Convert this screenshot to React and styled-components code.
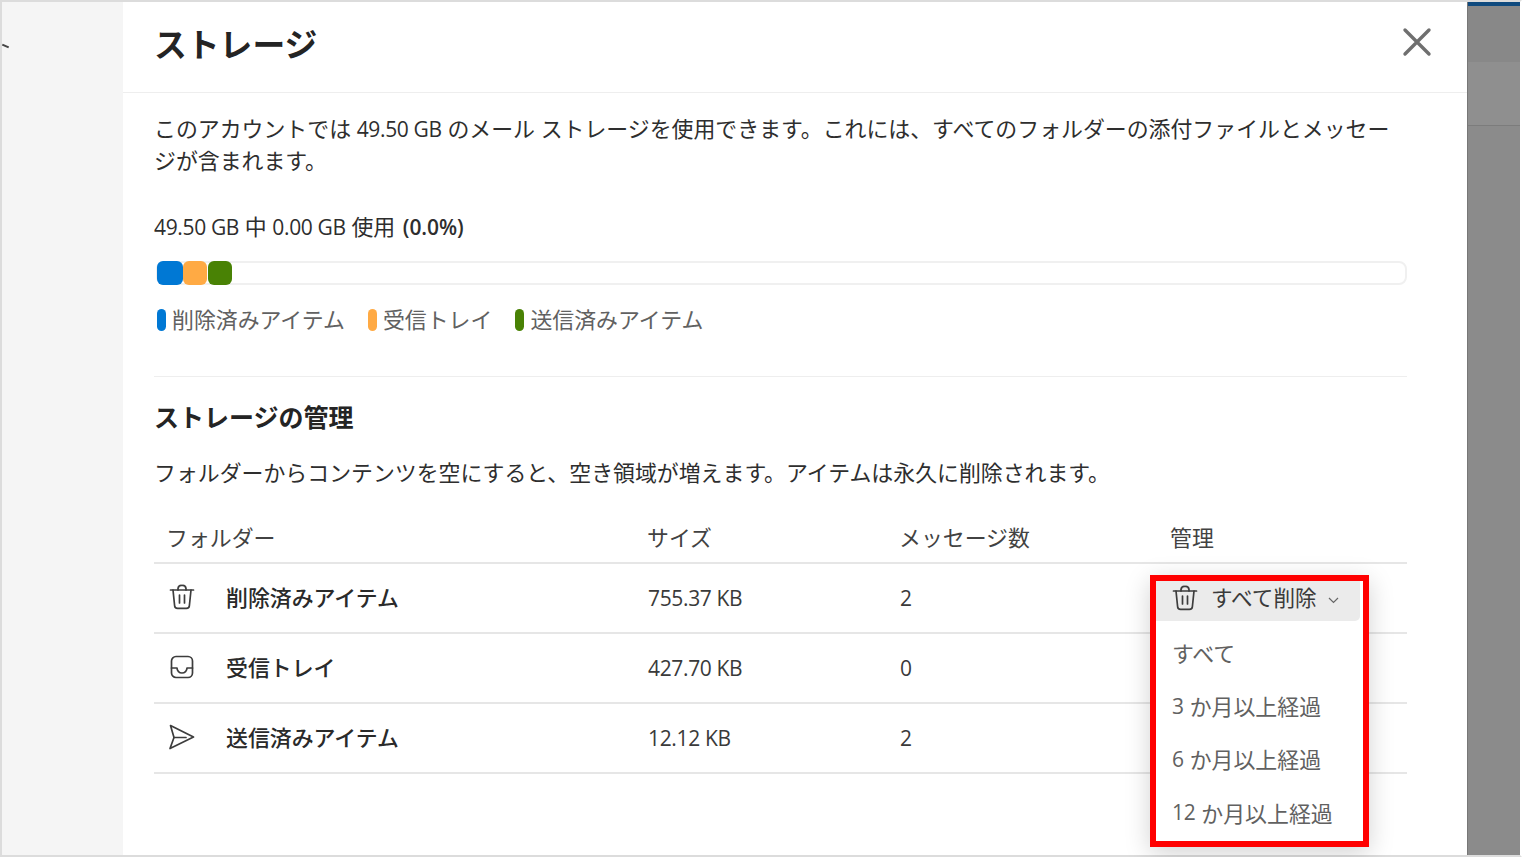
import React from 'react';
import styled, { createGlobalStyle } from 'styled-components';

const GlobalStyle = createGlobalStyle`
  html, body {
    margin: 0;
    height: 100%;
    overflow: hidden;
    background: #fff;
  }
  body {
    font-family: "Open Sans", "Noto Sans CJK JP", sans-serif;
    color: #242424;
  }
`;

const Frame = styled.div`
  box-sizing: border-box;
  display: flex;
  width: 1522px;
  height: 857px;
  border-top: 2px solid #dcdcdc;
  border-left: 2px solid #dcdcdc;
  border-bottom: 2px solid #dcdcdc;
  border-right: 2px solid #fff;
`;

const SidePane = styled.div`
  position: relative;
  width: 121px;
  flex-shrink: 0;
  background: #f5f5f5;
`;

const StrayMark = styled.span`
  position: absolute;
  left: 0;
  top: 43px;
  width: 7px;
  height: 2px;
  background: #444;
  transform: rotate(24deg);
`;

const Modal = styled.main`
  width: 1344px;
  flex-shrink: 0;
  background: #fff;
  display: flex;
  flex-direction: column;
`;

const Header = styled.header`
  box-sizing: border-box;
  height: 91px;
  padding: 0 35px 10px 31px;
  display: flex;
  align-items: center;
  justify-content: space-between;
  border-bottom: 1px solid #eee;
`;

const Title = styled.h1`
  margin: 5px 0 0;
  font-size: 32.8px;
  font-weight: 700;
  line-height: 44px;
  color: #242424;
`;

const CloseButton = styled.button`
  border: 0;
  padding: 0;
  background: none;
  display: flex;
  color: #6f6f6f;
`;

const Body = styled.div`
  padding: 20px 60px 0 31px;
`;

const Latin = styled.span`
  font-size: 21px;
  letter-spacing: -0.35px;
`;

const Percent = styled.b`
  margin-left: 2px;
  font-size: 21px;
  font-weight: 600;
  letter-spacing: -0.1px;
`;

const Intro = styled.p`
  margin: 0;
  font-size: 21.9px;
  line-height: 31px;
  color: #2e2e2e;
`;

const UsageLabel = styled.p`
  margin: 36px 0 0;
  font-size: 21.9px;
  line-height: 30px;
  color: #2e2e2e;
`;

const Track = styled.div`
  box-sizing: border-box;
  margin: 19px 0 0 2px;
  height: 24px;
  border: 2px solid #f0f0f0;
  border-radius: 8px;
  display: flex;
`;

const Segment = styled.span`
  width: ${p => p.$width}px;
  height: 24px;
  margin: -2px 0 0 ${p => p.$gap}px;
  border-radius: 6px;
  background: ${p => p.$color};
`;

const Legend = styled.ul`
  margin: 20px 0 0 3px;
  padding: 0;
  list-style: none;
  display: flex;
  gap: 23px;
`;

const LegendItem = styled.li`
  display: flex;
  align-items: center;
  gap: 6px;
  font-size: 21.9px;
  line-height: 30px;
  color: #616161;
`;

const LegendDot = styled.span`
  width: 9px;
  height: 22px;
  border-radius: 5px;
  background: ${p => p.$color};
`;

const Divider = styled.hr`
  margin: 41px 0 0;
  border: 0;
  border-top: 1px solid #eee;
`;

const SectionTitle = styled.h2`
  margin: 23px 0 0;
  font-size: 25px;
  line-height: 34px;
  font-weight: 700;
  color: #242424;
`;

const Hint = styled.p`
  margin: 24px 0 0;
  font-size: 21.9px;
  line-height: 30px;
  color: #2e2e2e;
`;

const Table = styled.div`
  margin-top: 23px;
`;

const Columns = styled.div`
  display: grid;
  grid-template-columns: 494px 252px 271px 1fr;
  box-sizing: border-box;
  height: ${p => p.$height}px;
  border-bottom: 2px solid #e6e6e6;
  align-items: center;
`;

const HeadCell = styled.div`
  margin-left: -1px;
  padding-left: ${p => (p.$first ? 13 : 0)}px;
  font-size: 21.9px;
  color: #424242;
`;

const NameCell = styled.div`
  display: flex;
  align-items: center;
  padding: 0 0 4px 15px;
  gap: 31px;
  font-size: 21.9px;
  font-weight: 500;
  color: #2a2a2a;
  svg { margin-top: 2px; }
`;

const ValueCell = styled.div`
  font-size: 21px;
  letter-spacing: -0.35px;
  color: #3a3a3a;
`;

const ManageCell = styled.div`
  position: relative;
  align-self: stretch;
`;

const Menu = styled.div`
  position: absolute;
  z-index: 2;
  left: -21px;
  top: 11px;
  box-sizing: border-box;
  width: 219px;
  height: 272px;
  border: 6px solid #ff0000;
  background: #fff;
  box-shadow: 0 6px 24px rgba(0, 0, 0, 0.18);
`;

const DeleteButton = styled.button`
  box-sizing: border-box;
  width: 204px;
  height: 40px;
  padding: 0 0 6px 16px;
  border: 0;
  border-radius: 0 0 5px 0;
  background: #ebebeb;
  display: flex;
  align-items: center;
  gap: 13px;
  font: inherit;
  font-size: 21.6px;
  color: #3a3a3a;
`;

const ButtonLabel = styled.span`
  margin-bottom: 4px;
`;

const Chevron = styled.svg`
  margin: 4px 0 0 -2px;
`;

const MenuItem = styled.div`
  height: 53.2px;
  display: flex;
  align-items: center;
  gap: 6px;
  padding-left: 16px;
  font-size: 21.9px;
  color: #616161;
`;

const MenuList = styled.div`
  padding-top: 5px;
`;

const Scrim = styled.div`
  flex: 1;
  display: flex;
  flex-direction: column;
  background: #8b8b8b;
  border-left: 1px solid #777;
`;

const ScrimBar = styled.div`
  height: 4px;
  background: #0f4a7e;
`;

const ScrimBand = styled.div`
  height: ${p => p.$height}px;
  background: ${p => p.$color};
`;

const TrashIcon = () => (
  <svg width="26" height="26" viewBox="0 0 26 26" fill="none" stroke="#3d3d3d" strokeWidth="1.7" strokeLinecap="round" strokeLinejoin="round">
    <path d="M1.5 6h23" />
    <path d="M9 6V4.5A3.6 3.6 0 0 1 13 1.5a3.6 3.6 0 0 1 4 3V6" />
    <path d="M4 6l1.6 15.5a3 3 0 0 0 3 2.9h8.8a3 3 0 0 0 3-2.9L22 6" />
    <path d="M10.5 11v8M15.5 11v8" />
  </svg>
);

const InboxIcon = () => (
  <svg width="26" height="26" viewBox="0 0 26 26" fill="none" stroke="#3d3d3d" strokeWidth="1.7" strokeLinecap="round" strokeLinejoin="round">
    <rect x="2.5" y="2.5" width="21" height="21" rx="4.5" />
    <path d="M2.5 14H8a5 5 0 0 0 10 0h5.5" />
  </svg>
);

const SendIcon = () => (
  <svg width="26" height="26" viewBox="0 0 26 26" fill="none" stroke="#3d3d3d" strokeWidth="1.7" strokeLinecap="round" strokeLinejoin="round">
    <path d="M1.5 1.5L24.5 13 1 24.5 5 13.5z" />
    <path d="M5 13.5h12" />
  </svg>
);

const folders = [
  { name: '削除済みアイテム', icon: <TrashIcon />, size: '755.37 KB', count: 2 },
  { name: '受信トレイ', icon: <InboxIcon />, size: '427.70 KB', count: 0 },
  { name: '送信済みアイテム', icon: <SendIcon />, size: '12.12 KB', count: 2 },
];

const legend = [
  { label: '削除済みアイテム', color: '#0078d4' },
  { label: '受信トレイ', color: '#ffaa44' },
  { label: '送信済みアイテム', color: '#498205' },
];

const App = () => (
  <>
    <GlobalStyle />
    <Frame>
      <SidePane>
        <StrayMark />
      </SidePane>
      <Modal>
        <Header>
          <Title>ストレージ</Title>
          <CloseButton aria-label="閉じる">
            <svg width="30" height="30" viewBox="0 0 30 30" fill="none" stroke="currentColor" strokeWidth="3.4" strokeLinecap="round">
              <path d="M3 3l24 24M27 3L3 27" />
            </svg>
          </CloseButton>
        </Header>
        <Body>
          <Intro>
            このアカウントでは <Latin>49.50 GB</Latin> のメール ストレージを使用できます。これには、すべてのフォルダーの添付ファイルとメッセージが含まれます。
          </Intro>
          <UsageLabel>
            <Latin>49.50 GB</Latin> 中 <Latin>0.00 GB</Latin> 使用 <Percent>(0.0%)</Percent>
          </UsageLabel>
          <Track>
            <Segment $width={26} $gap={-1} $color="#0078d4" />
            <Segment $width={24} $gap={0} $color="#ffaa44" />
            <Segment $width={24} $gap={1} $color="#498205" />
          </Track>
          <Legend>
            {legend.map(item => (
              <LegendItem key={item.label}>
                <LegendDot $color={item.color} />
                {item.label}
              </LegendItem>
            ))}
          </Legend>
          <Divider />
          <SectionTitle>ストレージの管理</SectionTitle>
          <Hint>フォルダーからコンテンツを空にすると、空き領域が増えます。アイテムは永久に削除されます。</Hint>
          <Table>
            <Columns $height={53}>
              <HeadCell $first>フォルダー</HeadCell>
              <HeadCell>サイズ</HeadCell>
              <HeadCell>メッセージ数</HeadCell>
              <HeadCell>管理</HeadCell>
            </Columns>
            {folders.map((folder, index) => (
              <Columns key={folder.name} $height={70}>
                <NameCell>
                  {folder.icon}
                  {folder.name}
                </NameCell>
                <ValueCell>{folder.size}</ValueCell>
                <ValueCell>{folder.count}</ValueCell>
                <ManageCell>
                  {index === 0 && (
                    <Menu>
                      <DeleteButton>
                        <TrashIcon />
                        <ButtonLabel>すべて削除</ButtonLabel>
                        <Chevron width="11" height="7" viewBox="0 0 11 7" fill="none" stroke="#666" strokeWidth="1.2">
                          <path d="M1 1l4.5 4.5L10 1" />
                        </Chevron>
                      </DeleteButton>
                      <MenuList>
                        <MenuItem>すべて</MenuItem>
                        <MenuItem><Latin>3</Latin> か月以上経過</MenuItem>
                        <MenuItem><Latin>6</Latin> か月以上経過</MenuItem>
                        <MenuItem><Latin>12</Latin> か月以上経過</MenuItem>
                      </MenuList>
                    </Menu>
                  )}
                </ManageCell>
              </Columns>
            ))}
          </Table>
        </Body>
      </Modal>
      <Scrim>
        <ScrimBar />
        <ScrimBand $height={56} $color="#888888" />
        <ScrimBand $height={63} $color="#8f8f8f" />
        <ScrimBand $height={1} $color="#7c7c7c" />
      </Scrim>
    </Frame>
  </>
);

export default App;
